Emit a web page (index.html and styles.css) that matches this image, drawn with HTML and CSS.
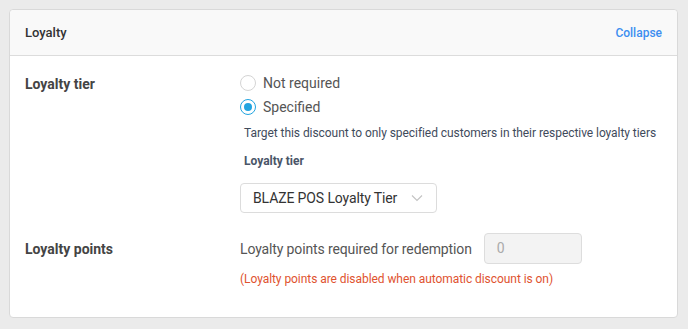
FILE: index.html
```html
<!DOCTYPE html>
<html>
<head>
  <title>Loyalty</title>
  <meta http-equiv="Content-Type" content="text/html; charset=UTF-8">
  <link rel="stylesheet" href="styles.css">
</head>
<body>
  <div class="card">
    <div class="card-header">
      <span class="card-title">Loyalty</span>
      <a class="collapse" href="#">Collapse</a>
    </div>

    <div class="card-body">
      <div class="row">
        <div class="row-label">Loyalty tier</div>
        <div class="row-content">
          <label class="radio">
            <span class="radio-dot"></span>
            <span>Not required</span>
          </label>
          <label class="radio">
            <span class="radio-dot checked"></span>
            <span>Specified</span>
          </label>
          <div class="help">Target this discount to only specified customers in their respective loyalty tiers</div>
          <div class="sub-label">Loyalty tier</div>
          <div class="select">
            <span>BLAZE POS Loyalty Tier</span>
            <svg width="12" height="8" viewBox="0 0 12 8"><path d="M1 1.5l5 5 5-5" fill="none" stroke="#c4c4c4" stroke-width="1.2"/></svg>
          </div>
        </div>
      </div>

      <div class="row points">
        <div class="row-label">Loyalty points</div>
        <div class="row-content">
          <div class="points-line">
            <span>Loyalty points required for redemption</span>
            <div class="input">0</div>
          </div>
          <div class="error">(Loyalty points are disabled when automatic discount is on)</div>
        </div>
      </div>
    </div>
  </div>
</body>
</html>
```

FILE: styles.css
```css
body {
  margin: 0;
  padding: 9px 10px 11px 9px;
  font-family: Roboto, "Liberation Sans", sans-serif;
  background-color: #ebebeb;
}

.card {
  background: #ffffff;
  border: 1px solid #d9d9d9;
  border-radius: 4px;
  height: 309px;
  box-sizing: border-box;
}

.card-header {
  display: flex;
  justify-content: space-between;
  align-items: center;
  height: 45px;
  padding: 0 15px;
  background-color: #f9f9f9;
  border-bottom: 1px solid #dcdcdc;
  border-radius: 4px 4px 0 0;
}

.card-title {
  font-size: 13px;
  font-weight: 500;
  color: #333333;
}

.collapse {
  font-size: 12px;
  font-weight: 500;
  color: #3d8ef0;
  text-decoration: none;
}

.card-body {
  padding: 15px 15px 0 15px;
}

.row {
  display: flex;
}

.row-label {
  width: 215px;
  font-size: 14px;
  font-weight: bold;
  color: #444444;
  padding-top: 5px;
}

.row-content {
  flex: 1;
}

.radio {
  display: flex;
  align-items: center;
  height: 24px;
  font-size: 14px;
  color: #555555;
}

.radio-dot {
  width: 16px;
  height: 16px;
  box-sizing: border-box;
  border: 1px solid #d4d4d4;
  border-radius: 50%;
  margin-right: 7px;
  position: relative;
}

.radio-dot.checked {
  border: 1.5px solid #21a4e0;
}

.radio-dot.checked::after {
  content: "";
  position: absolute;
  top: 2.5px;
  left: 2.5px;
  width: 8px;
  height: 8px;
  border-radius: 50%;
  background: #21a4e0;
}

.help {
  margin: 7px 0 0 4px;
  font-size: 12px;
  letter-spacing: -0.06px;
  color: #3f4b5c;
}

.sub-label {
  margin: 14px 0 0 4px;
  font-size: 12px;
  font-weight: bold;
  color: #4a5568;
}

.select {
  display: flex;
  justify-content: space-between;
  align-items: center;
  width: 197px;
  height: 30px;
  box-sizing: border-box;
  margin-top: 15px;
  padding: 0 13px 0 12px;
  border: 1px solid #dcdcdc;
  border-radius: 4px;
  font-size: 14px;
  letter-spacing: -0.12px;
  color: #333333;
}

.points {
  margin-top: 20px;
}

.points .row-label {
  padding-top: 8px;
}

.points-line {
  display: flex;
  align-items: center;
  font-size: 14px;
  letter-spacing: -0.13px;
  color: #555555;
}

.input {
  width: 98px;
  height: 31px;
  box-sizing: border-box;
  margin-left: 12px;
  padding: 6px 12px;
  background: #f3f3f3;
  border: 1px solid #dddddd;
  border-radius: 4px;
  font-size: 14px;
  color: #aaaaaa;
}

.error {
  margin-top: 8px;
  font-size: 12px;
  letter-spacing: -0.06px;
  color: #e0532f;
}
```
